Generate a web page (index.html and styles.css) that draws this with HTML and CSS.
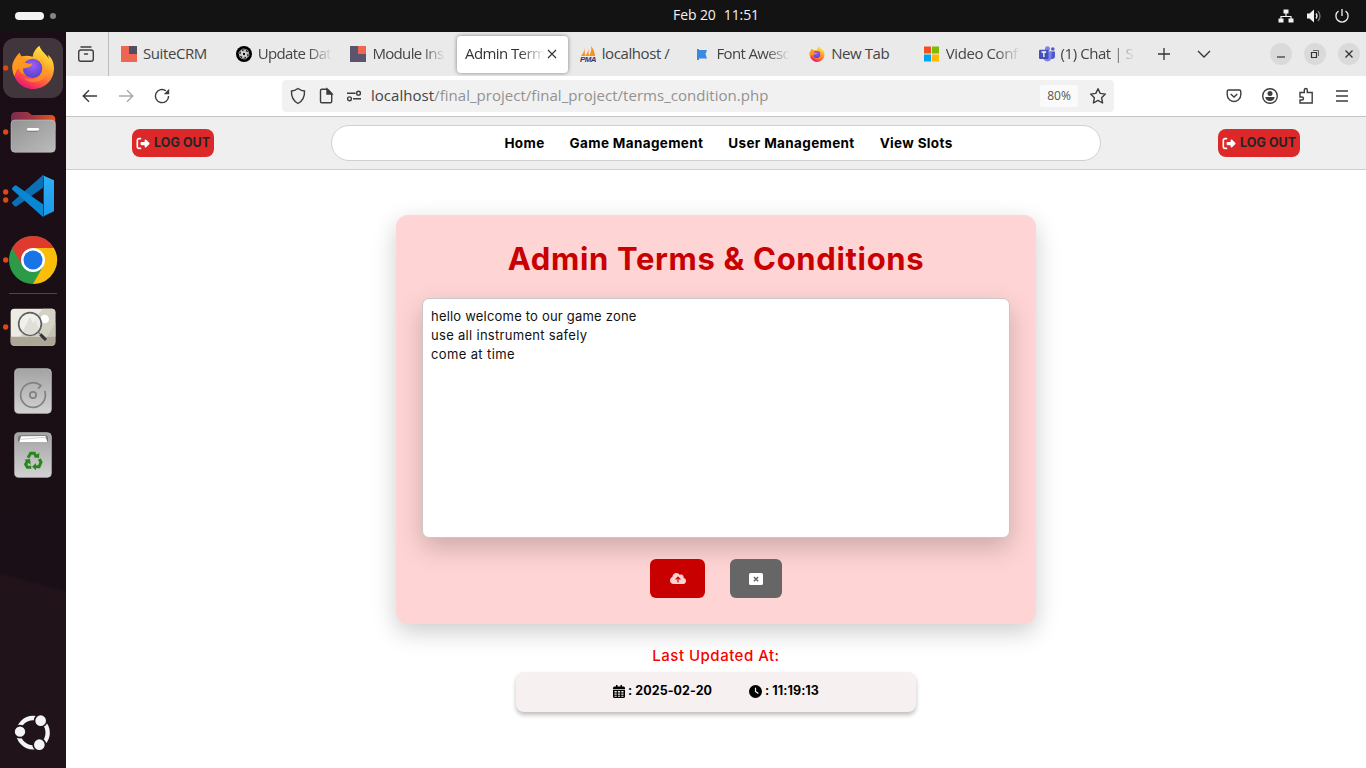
FILE: index.html
```html
<!DOCTYPE html>
<html lang="en">
<head>
<meta charset="utf-8">
<title>Admin Terms &amp; Conditions</title>
<link rel="stylesheet" href="styles.css">
</head>
<body>
<svg width="0" height="0" class="defs" aria-hidden="true">
  <defs>
    <linearGradient id="ffBody" x1=".8" y1="0" x2=".3" y2="1"><stop offset="0" stop-color="#fff04a"/><stop offset=".4" stop-color="#ffac29"/><stop offset=".72" stop-color="#ff5a3c"/><stop offset="1" stop-color="#e6107c"/></linearGradient>
    <radialGradient id="ffGlobe" cx=".5" cy=".35" r=".65"><stop offset="0" stop-color="#a35bf5"/><stop offset="1" stop-color="#5145ce"/></radialGradient>
    <linearGradient id="gray" x1="0" y1="0" x2="0" y2="1"><stop offset="0" stop-color="#a3a3a3"/><stop offset="1" stop-color="#d2d2d2"/></linearGradient>
    <linearGradient id="folder" x1="0" y1="0" x2="1" y2="1"><stop offset="0" stop-color="#929292"/><stop offset="1" stop-color="#bcbcbc"/></linearGradient>
    <linearGradient id="folderBack" x1="0" y1="0" x2="1" y2="0"><stop offset="0" stop-color="#7b2b50"/><stop offset=".5" stop-color="#a5383f"/><stop offset="1" stop-color="#e8551f"/></linearGradient>
    <linearGradient id="codeR" x1="0" y1="0" x2="0" y2="1"><stop offset="0" stop-color="#2bb0f5"/><stop offset="1" stop-color="#1f97ea"/></linearGradient>
    <symbol id="firefox" viewBox="34 134 130 134">
      <path d="M59 158c-4 7-5 14-4 21 3-4 5-6 9-7-2-6-3-10-5-14zM118 137c-11 9-19 19-20 33-26-8-52 2-60 21-4 43 24 76 61 76 37 0 63-27 63-63 0-19-9-34-19-40l4 13c-8-15-23-23-29-40z" fill="url(#ffBody)"/>
      <path d="M58 158c-10 12-21 24-21 45 0 9 3 19 6 25 5-10 5-22 17-24-4-6 3-11 16-12 12-2 21-3 24-9-8-5-17-9-26-7-8-4-14-10-16-18z" fill="#ff9a1f"/>
      <circle cx="98" cy="205" r="29" fill="url(#ffGlobe)"/>
      <path d="M54 190c15-7 31 4 43 0l-4 8c-8 7-18 5-24 8-3 5 1 14 7 19-13-4-22-15-22-35z" fill="#ff9523"/>
      <path d="M119 175c15 9 19 24 13 40 8-5 11-12 12-22 4 18-3 39-20 48-19 10-43 6-53-7 20 8 44 3 53-15 8-16 4-31-5-44z" fill="#ff9c27" opacity=".55"/>
    </symbol>
    <symbol id="logout" viewBox="0 0 512 512"><path d="M377.9 105.9L500.7 228.7c7.2 7.2 11.3 17.1 11.3 27.3s-4.1 20.1-11.3 27.3L377.9 406.1c-6.4 6.4-15 9.9-24 9.900c-18.7 0-33.9-15.2-33.9-33.9l0-62.1-128 0c-17.7 0-32-14.3-32-32l0-64c0-17.7 14.3-32 32-32l128 0 0-62.1c0-18.7 15.2-33.9 33.9-33.9c9 0 17.6 3.6 24 9.900zM160 96L96 96c-17.7 0-32 14.3-32 32l0 256c0 17.7 14.3 32 32 32l64 0c17.7 0 32 14.3 32 32s-14.3 32-32 32l-64 0c-53 0-96-43-96-96L0 128C0 75 43 32 96 32l64 0c17.7 0 32 14.3 32 32s-14.3 32-32 32z"/></symbol>
  </defs>
</svg>

<header class="system-bar">
  <div class="workspaces"><span class="pill"></span><span class="dot"></span></div>
  <div class="datetime"><span>Feb 20</span><span>11:51</span></div>
  <div class="tray">
    <svg width="16" height="16" viewBox="0 0 16 16"><path d="M8 5v4M3 11V8.500h10V11" fill="none" stroke="#f2f2f2" stroke-width="1.200"/><path d="M5.500 1.500h5v4h-5zM.5 10.500h5v4h-5zM10.500 10.500h5v4h-5z" fill="#f2f2f2"/></svg>
    <svg width="16" height="16" viewBox="0 0 16 16"><path d="M1 5.500h2.500L8 1.500v13l-4.500-4H1z" fill="#f2f2f2"/><path d="M10 5.500q2 2.500 0 5" fill="none" stroke="#f2f2f2" stroke-width="1.300"/><path d="M12 3q4 5 0 10" fill="none" stroke="#777" stroke-width="1.300"/></svg>
    <svg width="16" height="16" viewBox="0 0 16 16"><path d="M4.500 3A6.100 6.100 0 1 0 11.500 3M8 1v7" fill="none" stroke="#f2f2f2" stroke-width="1.300"/></svg>
  </div>
</header>

<div class="desktop">
  <aside class="dock">
    <svg class="dock-item" viewBox="0 108 198 192"><rect x="9" y="114" width="180" height="180" rx="36" fill="#40363b"/><circle cx="17" cy="204" r="8" fill="#dd4814"/><use href="#firefox" x="34" y="134" width="130" height="134"/></svg>
    <svg class="dock-item" viewBox="0 300 198 192"><circle cx="17" cy="396" r="8" fill="#dd4814"/><path d="M33 352q0-16 16-16h31q5 0 9 4l6 5h58q13 0 13 14v30H33z" fill="url(#folderBack)"/><rect x="33" y="360" width="133" height="97" rx="12" fill="url(#folder)" stroke="#cfcfcf" stroke-width="1.500"/><rect x="81" y="386" width="36" height="9" rx="4" fill="#777"/><rect x="81" y="384" width="36" height="8.500" rx="4" fill="#fff"/></svg>
    <svg class="dock-item" viewBox="0 492 198 192"><circle cx="17" cy="576" r="8" fill="#dd4814"/><circle cx="17" cy="600" r="8" fill="#dd4814"/><path d="M129 525v38L50 619q-3 2-6 0l-7-7q-2-3 0-6z" fill="#0a6fb5"/><path d="M129 651v-38L50 557q-3-2-6 0l-7 6q-2 3 0 6z" fill="#0b86d3"/><path d="M126 525l36 16v93l-36 17q5-2 5-8V533q0-6-5-8z" fill="url(#codeR)"/></svg>
    <svg class="dock-item" viewBox="0 -6 198 192"><circle cx="17" cy="90" r="8" fill="#dd4814"/><circle cx="99" cy="90" r="72" fill="#2c9b48"/><path d="M36.600 54A72 72 0 0 1 161.400 54H99L68 108z" fill="#e03a2e"/><path d="M161.400 54A72 72 0 0 1 99 162L130 108 99 54z" fill="#fbbd09"/><circle cx="99" cy="90" r="36" fill="#fff"/><circle cx="99" cy="90" r="28.500" fill="#1b73e8"/></svg>
    <span class="dock-rule"></span>
    <svg class="dock-item" viewBox="0 195 198 192"><circle cx="17" cy="291" r="8" fill="#dd4814"/><rect x="32" y="236" width="134" height="111" rx="11" fill="#ecece5"/><path d="M60 320l68-84h28q10 0 10 11v73z" fill="#d3d2c5"/><path d="M142 320l24-42v42z" fill="#c4c3b4"/><path d="M32 320h134v16q0 11-11 11H43q-11 0-11-11z" fill="#aca696"/><circle cx="134" cy="267" r="13" fill="#fff"/><circle cx="90" cy="282" r="34" fill="#f1f1ed" fill-opacity=".85" stroke="#606060" stroke-width="5"/><path d="M68 304l22-43 9 19 8-8 9 24q-10 19-27 18-14-1-21-10z" fill="#dfdfd8"/><path d="M115 307l6 6" stroke="#777" stroke-width="4"/><path d="M121 313l17 17" stroke="#333" stroke-width="9"/></svg>
    <svg class="dock-item" viewBox="0 387 198 192"><rect x="44" y="416" width="110" height="134" rx="12" fill="url(#gray)" stroke="#d0d0d0" stroke-width="2"/><path d="M134 483a37 37 0 1 1-11-16l-9 9" fill="none" stroke="#818181" stroke-width="5"/><circle cx="99" cy="495" r="9.500" fill="none" stroke="#818181" stroke-width="5"/></svg>
    <svg class="dock-item" viewBox="0 579 198 192"><rect x="44" y="608" width="110" height="134" rx="12" fill="url(#gray)" stroke="#d0d0d0" stroke-width="2"/><path d="M54 635v-10q0-9 9-9h72q9 0 9 9v10z" fill="#777"/><path d="M58 636l5-17 73-1 6 18z" fill="#fff"/><path d="M62 628l70-6 8 5" fill="none" stroke="#bbb" stroke-width="2"/><g fill="none" stroke="#27871c" stroke-width="9"><path d="M84 683l8-13h11l6 10"/><path d="M118 687l5 10-6 13h-12"/><path d="M94 712H82l-5-9 7-12"/></g><path d="M101 682l16 2 1-16zM108 699v22l-12-11zM73 689l17-2 2 17z" fill="#27871c"/></svg>
    <svg class="dock-item launcher" viewBox="0 60 198 192"><circle cx="99" cy="158" r="44" fill="none" stroke="#f4f4f4" stroke-width="13"/><g fill="#f4f4f4" stroke="#20131a" stroke-width="5"><circle cx="122" cy="122" r="18.500"/><circle cx="60" cy="155" r="18"/><circle cx="118" cy="194" r="18.500"/></g></svg>
  </aside>

  <div class="browser">
    <div class="tab-strip">
      <div class="tab-view"><svg width="18" height="18" viewBox="0 0 18 18" fill="none" stroke="#3f3f3f" stroke-width="1.400" stroke-linecap="round"><rect x="1.700" y="5" width="14.600" height="11.300" rx="2.200"/><path d="M4 2h10M7.500 9h3"/></svg></div>
      <div class="tabs">
        <div class="tab"><svg viewBox="0 0 16 16"><path d="M0 0h16v16H0z" fill="#ee6553"/><path d="M8 0h8v8H8z" fill="#534d64"/></svg><span>SuiteCRM</span></div>
        <div class="tab"><svg viewBox="0 0 16 16"><circle cx="8" cy="8" r="8"/><g fill="none" stroke="#fff" stroke-width=".6"><path id="petal" d="M5 9.700V5.300q0-2 2-2.300 2-.2 2.800 1.300L6.500 6.200v3.400L8 10.500"/><use href="#petal" transform="rotate(60 8 8)"/><use href="#petal" transform="rotate(120 8 8)"/><use href="#petal" transform="rotate(180 8 8)"/><use href="#petal" transform="rotate(240 8 8)"/><use href="#petal" transform="rotate(300 8 8)"/></g></svg><span class="fade snug">Update Dat</span></div>
        <div class="tab"><svg viewBox="0 0 16 16"><path d="M0 0h16v16H0z" fill="#5b546d"/><path d="M8 0h8v8H8z" fill="#f06652"/></svg><span class="fade snug">Module Ins</span></div>
        <div class="tab active"><span class="fade">Admin Term</span><svg class="close" viewBox="0 0 10 10"><path d="M1 1l8 8M9 1L1 9" stroke="#333" stroke-width="1.100"/></svg></div>
        <div class="tab"><svg viewBox="0 0 16 16"><path d="M4.500 1.500Q4.500 6 1 10h4zM8 1q1 5-3 9h4zM11 0q4 5 4 10H9q3-5 2-10z" fill="#f79122"/><text x="0" y="15.700" font-family="Liberation Sans" font-size="6.500" font-weight="bold" font-style="italic" fill="#333765" textLength="16" lengthAdjust="spacingAndGlyphs">PMA</text></svg><span>localhost /</span></div>
        <div class="tab"><svg viewBox="0 0 16 16"><path d="M3 3h2v1h8l-1.500 4 1.500 4.500H5V14H3z" fill="#3c8ae0"/></svg><span class="fade snug">Font Aweso</span></div>
        <div class="tab"><svg viewBox="0 0 16 16"><use href="#firefox" width="16" height="16"/></svg><span>New Tab</span></div>
        <div class="tab"><svg viewBox="0 0 16 16"><path d="M0 .5h7v7H0z" fill="#f25022"/><path d="M8 .5h7v7H8z" fill="#7fba00"/><path d="M0 8.500h7v7H0z" fill="#00a4ef"/><path d="M8 8.500h7v7H8z" fill="#ffb900"/></svg><span class="fade">Video Conf</span></div>
        <div class="tab"><svg viewBox="0 0 16 16"><circle cx="8.500" cy="2.800" r="2.500" fill="#7b83eb"/><circle cx="13.800" cy="3" r="1.800" fill="#5059c9"/><path d="M11 5.500h5V10q0 3-3 3h-2z" fill="#5059c9"/><path d="M4 5.500h8.500V11q0 4-4 4.500-4-.5-4.500-4z" fill="#7b83eb"/><rect y="3.700" width="9.500" height="9.300" rx="1" fill="#464eb8"/><path d="M2.500 6h4.700M4.850 6v5" stroke="#fff" stroke-width="1.300"/></svg><span class="fade">(1) Chat | S</span></div>
      </div>
      <svg class="new-tab" width="14" height="14" viewBox="0 0 14 14"><path d="M7 1v12M1 7h12" stroke="#333" stroke-width="1.300"/></svg>
      <svg width="14" height="14" viewBox="0 0 14 14"><path d="M1 4l6 6 6-6" fill="none" stroke="#333" stroke-width="1.300"/></svg>
      <div class="window-controls">
        <span><svg viewBox="0 0 10 10"><path d="M1 8h8" stroke="#333" stroke-width="1.200"/></svg></span>
        <span><svg viewBox="0 0 10 10" fill="none" stroke="#333"><path d="M1.500 3.500h5v5h-5z" stroke-width="1.200"/><path d="M3 1.500h5.500V7" stroke="#666"/></svg></span>
        <span><svg viewBox="0 0 10 10"><path d="M1.500 1.500l7 7M8.500 1.500l-7 7" stroke="#333" stroke-width="1.300"/></svg></span>
      </div>
    </div>

    <div class="toolbar">
      <div class="history">
        <svg viewBox="0 0 18 18"><path d="M16 9H2.500M8 3.200L2.200 9 8 14.800"/></svg>
        <svg class="disabled" viewBox="0 0 18 18"><path d="M2 9h13.500M10 3.200L15.800 9 10 14.800"/></svg>
        <svg viewBox="0 0 18 18"><path d="M15.600 9A6.600 6.600 0 1 1 13 3.800"/><path d="M16.200 1.800v5.400h-5.400z" fill="#3d3d3d" stroke="none"/></svg>
      </div>
      <div class="url-bar">
        <svg viewBox="0 0 18 18"><path d="M9 1.500q3.500 2.500 6.500 2.500 .5 8.500-6.500 12.500Q2 12.500 2.500 4 5.500 4 9 1.500z"/></svg>
        <svg viewBox="0 0 18 18"><path d="M3.500 3.500q0-1.300 1.300-1.300h5.700l4.200 4.300v8q0 1.300-1.300 1.300H4.800q-1.300 0-1.300-1.300z"/><path d="M10 2l5 5h-5z" fill="#3d3d3d"/></svg>
        <svg viewBox="0 0 18 18"><path d="M2 6.200h8.500M8 11.800h8"/><circle cx="13.500" cy="6.200" r="1.900"/><circle cx="4.500" cy="11.800" r="1.900"/></svg>
        <span class="url"><b>localhost</b>/final_project/final_project/terms_condition.php</span>
        <span class="zoom">80%</span>
        <svg class="star" viewBox="0 0 18 18"><path d="M9 1.700l2.200 4.700 5.200.7-3.800 3.600 1 5.300L9 13.400 4.400 16l1-5.300L1.600 7.100l5.200-.7z" stroke-linejoin="round"/></svg>
      </div>
      <div class="actions">
        <svg viewBox="0 0 18 18"><path d="M3.700 3h10.600q1.500 0 1.500 1.500v3q0 3.500-2.300 5.200Q11.300 14.500 9 14.500t-4.500-1.800Q2.200 11 2.200 7.500v-3Q2.200 3 3.700 3zM5.700 7L9 10l3.300-3"/></svg>
        <svg viewBox="0 0 18 18"><circle cx="9" cy="9" r="7.300"/><circle cx="9" cy="6.400" r="2.500" fill="#3d3d3d" stroke="none"/><path d="M4.300 10h9.400q-.6 4-4.700 4t-4.700-4z" fill="#3d3d3d" stroke="none"/></svg>
        <svg viewBox="0 0 18 18"><path d="M3 5.500h4.300V3.200q0-1.700 1.500-1.700t1.500 1.700v2.300h4.900V16H3v-3h1.800q1.700 0 1.700-1.500T4.800 10H3z"/></svg>
        <svg viewBox="0 0 18 18"><path d="M3 4h12M3 9h12M3 14h12"/></svg>
      </div>
    </div>

    <main class="page">
      <div class="site-header">
        <a class="logout"><svg><use href="#logout"/></svg><span>LOG OUT</span></a>
        <nav class="site-nav"><a>Home</a><a>Game Management</a><a>User Management</a><a>View Slots</a></nav>
        <a class="logout"><svg><use href="#logout"/></svg><span>LOG OUT</span></a>
      </div>
      <section class="terms-card">
        <h1>Admin Terms &amp; Conditions</h1>
        <div class="terms-text"><p>hello welcome to our game zone</p><p class="wide">use all instrument safely</p><p class="wider">come at time</p></div>
        <div class="buttons">
          <button class="save" aria-label="Update"><svg width="16" height="13" viewBox="0 0 640 512"><path fill="#ffd2d2" d="M144 480C64.500 480 0 415.500 0 336c0-62.800 40.200-116.200 96.200-135.900c-.1-2.700-.2-5.400-.2-8.100c0-88.400 71.600-160 160-160c59.300 0 111 32.200 138.700 80.200C409.900 102 428.300 96 448 96c53 0 96 43 96 96c0 12.200-2.300 23.800-6.400 34.600C596 238.400 640 290.100 640 352c0 70.700-57.300 128-128 128H144zm79-217c-9.400 9.400-9.400 24.600 0 33.900s24.600 9.400 33.900 0l39-39V392c0 13.300 10.700 24 24 24s24-10.700 24-24V257.900l39 39c9.400 9.400 24.600 9.400 33.900 0s9.400-24.600 0-33.900l-80-80c-9.400-9.400-24.600-9.400-33.900 0l-80 80z"/></svg></button>
          <button class="cancel" aria-label="Cancel"><svg width="14" height="12" viewBox="0 0 14 12"><rect width="14" height="12" rx="1.600" fill="#fff"/><path d="M4.900 4l4.200 4.200M9.100 4L4.900 8.200" stroke="#666" stroke-width="1.500"/></svg></button>
        </div>
      </section>
      <p class="updated-label">Last Updated At:</p>
      <div class="updated-box">
        <span class="stamp"><svg width="12" height="13" viewBox="0 0 12 13"><path d="M1.500 1.500H3V0h1.500v1.500h3V0H9v1.500h1.500Q12 1.500 12 3v1H0V3q0-1.500 1.500-1.500zM0 4.800h12v6.700q0 1.500-1.500 1.500h-9Q0 13 0 11.500z"/><path d="M1.500 6.100h2.200v1.400H1.500zM4.900 6.100h2.200v1.400H4.900zM8.300 6.100h2.200v1.400H8.300zM1.500 8.500h2.200v1.300H1.500zM4.900 8.500h2.200v1.300H4.900zM8.300 8.500h2.200v1.300H8.300zM1.500 10.800h2.200v1H1.500zM4.900 10.800h2.200v1H4.900zM8.300 10.800h2.200v1H8.300z" fill="#f7f0f0"/></svg><span>: 2025-02-20</span></span>
        <span class="stamp"><svg width="13" height="13" viewBox="0 0 512 512"><path d="M256 0a256 256 0 1 1 0 512A256 256 0 1 1 256 0zM232 120V256c0 8 4 15.500 10.700 20l96 64c11 7.400 25.900 4.400 33.300-6.700s4.400-25.900-6.700-33.300L280 243.200V120c0-13.300-10.700-24-24-24s-24 10.700-24 24z" fill-rule="evenodd"/></svg><span>: 11:19:13</span></span>
      </div>
    </main>
  </div>
</div>
</body>
</html>
```
FILE: styles.css
```css
* { box-sizing: border-box; }
body { margin: 0; width: 1366px; height: 768px; overflow: hidden; display: flex; flex-direction: column; background: #fff; font-family: "Open Sans", "Noto Sans", sans-serif; }
svg { flex: none; display: block; }
p, h1 { margin: 0; }

.system-bar { height: 32px; flex: none; background: #131313; color: #f2f2f2; display: grid; grid-template-columns: 1fr auto 1fr; align-items: center; }
.workspaces { display: flex; align-items: center; gap: 6px; padding-left: 15px; }
.pill { width: 29px; height: 8px; border-radius: 4px; background: #f4f4f4; }
.dot { width: 6px; height: 6px; border-radius: 50%; background: #858585; }
.datetime { display: flex; gap: 8px; font-size: 14px; letter-spacing: -.1px; transform: translateX(33px); line-height: 20px; padding-bottom: 2px; white-space: nowrap; }
.tray { display: flex; justify-content: flex-end; gap: 12px; padding-right: 16px; }

.desktop { flex: 1; display: flex; min-height: 0; }
.dock { width: 66px; flex: none; display: flex; flex-direction: column; align-items: center; padding: 4px 0; background: linear-gradient(195deg, #1b0d15 0%, #1a0f16 74%, #22131b 74.500%, #20131a 100%); }
.dock-item { width: 66px; height: 64px; }
.dock-rule { width: 48px; height: 1px; margin: 1px 0; background: #4d4549; flex: none; }
.launcher { margin-top: auto; }

.browser { flex: 1; min-width: 0; display: flex; flex-direction: column; }
.tab-strip { height: 44px; flex: none; display: flex; align-items: center; background: #eaeaea; }
.tab-view { width: 43px; height: 44px; border-right: 1px solid #bdbdbd; display: flex; align-items: center; padding-left: 11px; flex: none; }
.tabs { display: flex; margin-left: 4px; flex: none; }
.tab { width: 114.700px; height: 37px; display: flex; align-items: center; padding-left: 8px; gap: 6px; color: #444; font-size: 15px; white-space: nowrap; letter-spacing: -.42px; }
.tab svg { width: 16px; height: 16px; }
.tab span { line-height: 20px; width: 74px; padding-bottom: 2px; }
.fade { -webkit-mask-image: linear-gradient(to right, #000 68%, transparent 100%); mask-image: linear-gradient(to right, #000 68%, transparent 100%); }
.tab .snug { letter-spacing: -.65px; }
.active { width: 110.700px; margin-right: 4px; background: #fff; border-radius: 4px; box-shadow: 0 0 4px rgba(0, 0, 0, .45); gap: 2px; color: #333; }
.tab.active span { width: 80px; letter-spacing: -.6px; }
.tab .close { width: 10px; height: 10px; }
.new-tab { margin: 0 26px 0 12px; }
.window-controls { margin-left: auto; display: flex; gap: 12px; padding-right: 6px; }
.window-controls span { width: 22px; height: 22px; border-radius: 50%; background: #dadada; display: grid; place-items: center; }
.window-controls svg { width: 10px; height: 10px; }

.toolbar { height: 41px; flex: none; display: flex; align-items: center; background: #fff; border-bottom: 1px solid #c4c4c4; }
.toolbar svg { width: 18px; height: 18px; fill: none; stroke: #3d3d3d; stroke-width: 1.400; }
.history { width: 216px; display: flex; gap: 18px; padding-left: 15px; }
.toolbar .disabled { stroke: #aaa; }
.url-bar { width: 832px; height: 32px; border-radius: 4px; background: #f1f1f1; display: flex; align-items: center; gap: 10px; padding: 0 7px; }
.url { flex: 1; color: #929292; font-size: 15px; letter-spacing: .03px; line-height: 20px; padding-bottom: 2px; margin-left: -2px; }
.url b { font-weight: 400; color: #444; }
.zoom { width: 38px; height: 22px; background: #fafafa; border-radius: 3px; font-size: 12px; line-height: 22px; text-align: center; color: #555; margin-right: 1px; }
.actions { margin-left: auto; display: flex; gap: 18px; padding-right: 15px; }

.page { flex: 1; display: flex; flex-direction: column; align-items: center; font-family: Inter, sans-serif; }
.site-header { width: 100%; height: 53px; flex: none; display: flex; align-items: center; justify-content: space-between; padding: 0 66px; background: #efefef; border-bottom: 1px solid #d0d0d0; }
.logout { width: 82px; height: 28px; border-radius: 8px; background: #dc2828; display: flex; align-items: center; gap: 4px; padding-left: 4px; font-size: 12.500px; font-weight: 700; color: #252525; white-space: nowrap; letter-spacing: .05px; line-height: 28px; }
.logout svg { width: 14px; height: 13px; fill: #fff; }
.site-nav { width: 770px; height: 36px; padding-left: 25px; border: 1px solid #d0d0d0; border-radius: 18px; background: #fff; display: flex; justify-content: center; gap: 25px; font-size: 13.500px; font-weight: 700; letter-spacing: .35px; line-height: 35px; color: #000; }
.site-nav a { white-space: nowrap; }

.terms-card { width: 640px; height: 409px; flex: none; margin-top: 45px; padding: 24px 26px 25px; border-radius: 12px; background: #ffd4d4; box-shadow: 0 8px 24px rgba(0, 0, 0, .2); display: flex; flex-direction: column; align-items: center; }
h1 { font-size: 31px; line-height: 39px; font-weight: 700; color: #c80000; white-space: nowrap; letter-spacing: .67px; }
.terms-text { width: 588px; height: 240px; margin-top: 20px; flex: none; padding: 8px; border: 1px solid #c8c8c8; border-radius: 7px; background: #fff; box-shadow: 0 10px 26px rgba(0, 0, 0, .2); font-size: 13px; line-height: 19px; letter-spacing: .2px; color: #111; }
.terms-text .wide { letter-spacing: .3px; }
.terms-text .wider { letter-spacing: .37px; }
.buttons { display: flex; gap: 25px; margin-top: 21px; }
.buttons button { height: 39px; border: 0; padding: 0; border-radius: 6px; display: grid; place-items: center; }
.save { width: 55px; background: #c80000; }
.cancel { width: 52px; background: #666; }
.updated-label { margin-top: 22px; font-size: 15px; line-height: 20px; letter-spacing: .5px; font-weight: 500; color: #f80000; }
.updated-box { width: 400px; height: 40px; flex: none; margin-top: 6px; border-radius: 8px; background: #f7f0f0; box-shadow: 0 3px 4px rgba(0, 0, 0, .25); display: flex; justify-content: center; gap: 37px; font-size: 12.500px; font-weight: 700; letter-spacing: .06px; line-height: 38px; color: #000; }
.stamp { height: 38px; display: flex; align-items: center; gap: 3px; white-space: nowrap; }
```
